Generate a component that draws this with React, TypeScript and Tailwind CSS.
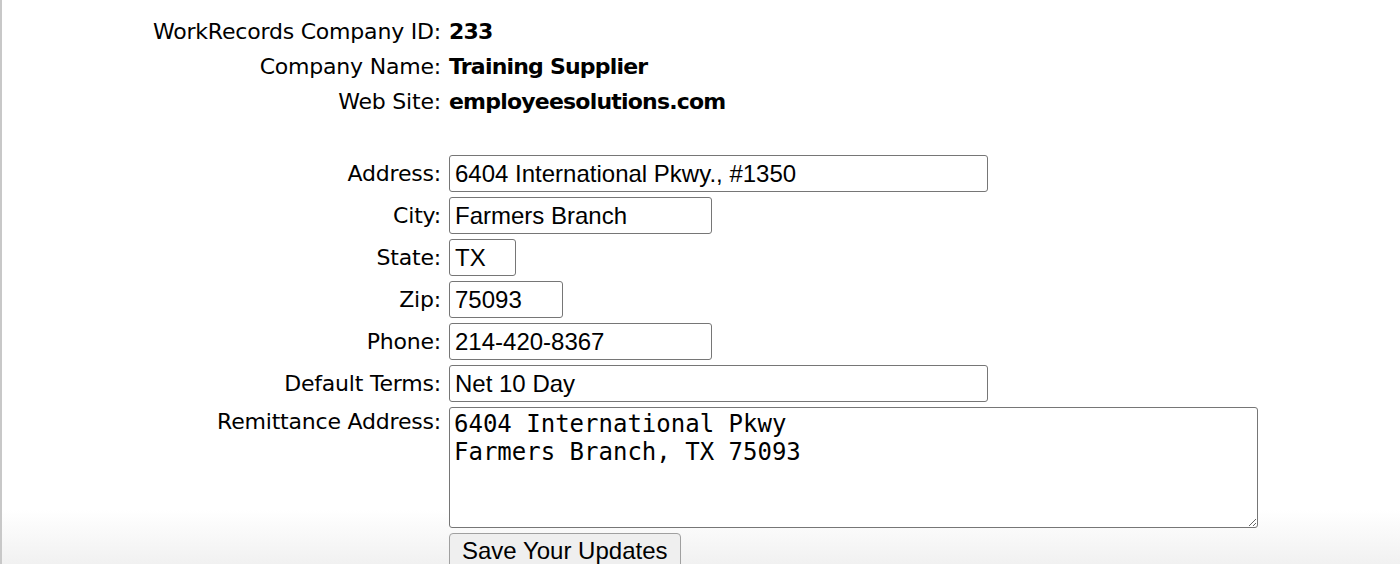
import React from "react";

const labelFont = { fontFamily: '"DejaVu Sans", sans-serif' };

function Row({ label, children, top = "items-center" }: { label: string; children: React.ReactNode; top?: string }) {
  return (
    <div className={`flex ${top} gap-[8px]`}>
      <div className="w-[439px] shrink-0 text-right text-[22px] leading-[30px] text-black tracking-[-0.2px]" style={labelFont}>
        {label}
      </div>
      {children}
    </div>
  );
}

function Input({ value, w }: { value: string; w: string }) {
  return (
    <input
      readOnly
      value={value}
      className={`${w} h-[37px] rounded-[3px] border border-[#767676] bg-white px-[5px] text-[24px] text-black font-['Liberation_Sans',Arial,sans-serif] outline-none`}
    />
  );
}

export default function App() {
  return (
    <div className="relative h-[564px] w-[1400px] overflow-hidden border-l-[2px] border-[#c8c8c8] bg-[linear-gradient(to_bottom,#ffffff_0px,#ffffff_510px,#f1f1f1_564px)]">
      <div className="flex flex-col pt-[14px]">
        <div className="flex flex-col">
          {[
            ["WorkRecords Company ID:", "233"],
            ["Company Name:", "Training Supplier"],
            ["Web Site:", "employeesolutions.com"],
          ].map(([l, v]) => (
            <div key={l} className="flex h-[35px] items-center gap-[8px]">
              <div className="w-[439px] shrink-0 text-right text-[22px] text-black tracking-[-0.2px]" style={labelFont}>
                {l}
              </div>
              <div className="text-[22px] font-bold text-black tracking-[-0.8px]" style={labelFont}>
                {v}
              </div>
            </div>
          ))}
        </div>
        <div className="mt-[36px] flex flex-col gap-[5px]">
          <Row label="Address:"><Input value="6404 International Pkwy., #1350" w="w-[539px]" /></Row>
          <Row label="City:"><Input value="Farmers Branch" w="w-[263px]" /></Row>
          <Row label="State:"><Input value="TX" w="w-[67px]" /></Row>
          <Row label="Zip:"><Input value="75093" w="w-[114px]" /></Row>
          <Row label="Phone:"><Input value="214-420-8367" w="w-[263px]" /></Row>
          <Row label="Default Terms:"><Input value="Net 10 Day" w="w-[539px]" /></Row>
          <Row label="Remittance Address:" top="items-start">
            <textarea
              readOnly
              value={"6404 International Pkwy\nFarmers Branch, TX 75093"}
              className="h-[121px] w-[809px] resize rounded-[3px] border border-[#767676] bg-white px-[4px] py-[2px] text-[24px] leading-[28px] text-black font-['DejaVu_Sans_Mono',monospace] outline-none"
            />
          </Row>
          <div className="flex">
            <div className="w-[447px] shrink-0" />
            <button className="h-[36px] rounded-[4px] border border-[#a0a0a0] bg-[#efefef] px-[12px] text-[24px] leading-[34px] text-black font-['Liberation_Sans',Arial,sans-serif]">
              Save Your Updates
            </button>
          </div>
        </div>
      </div>
    </div>
  );
}
